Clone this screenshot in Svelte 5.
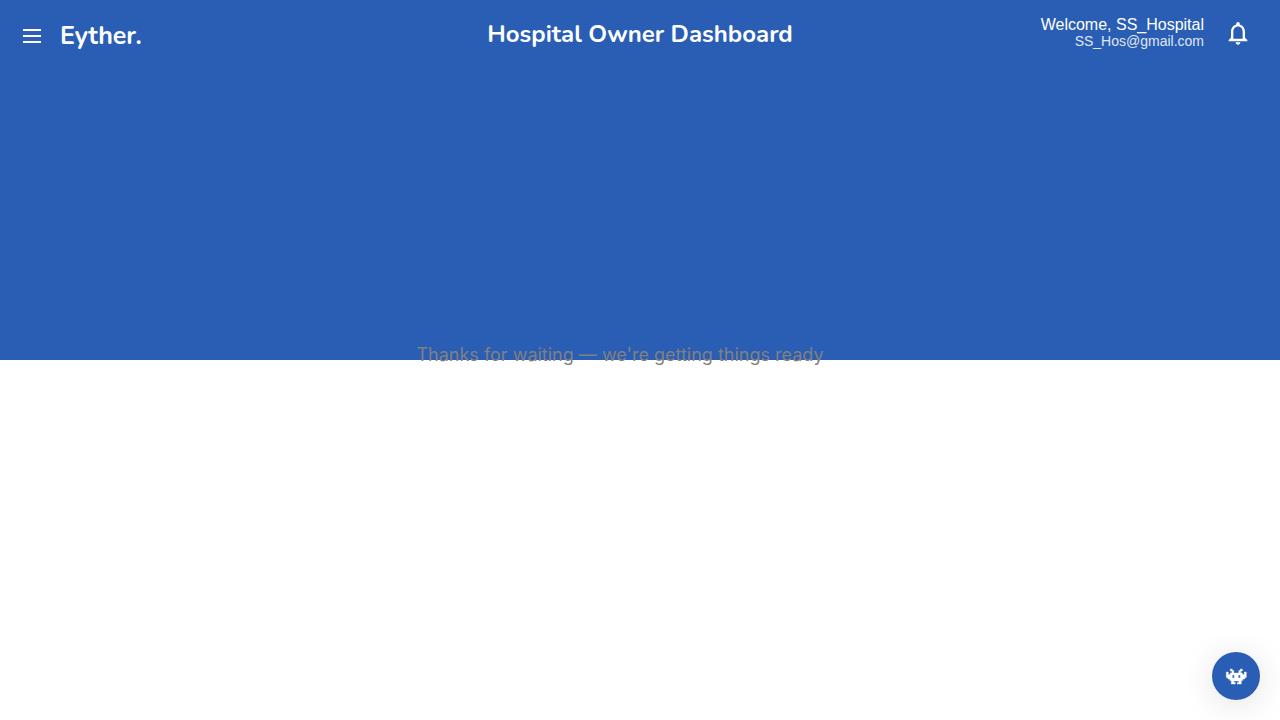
<script>
  const user = { name: 'SS_Hospital', email: 'SS_Hos@gmail.com' };
</script>

<svelte:head><title>Hospital Owner Dashboard</title></svelte:head>

<div class="page">
  <div class="hero">
    <header>
      <div class="brand">
        <button class="icon" aria-label="Open menu">
          <svg width="24" height="24" viewBox="0 0 24 24" fill="currentColor" aria-hidden="true">
            <path d="M3 5h18v2H3zM3 11h18v2H3zM3 17h18v2H3z" />
          </svg>
        </button>
        <span class="logo">Eyther.</span>
      </div>
      <h1>Hospital Owner Dashboard</h1>
      <div class="account">
        <div class="user">
          <span>Welcome, {user.name}</span>
          <span class="email">{user.email}</span>
        </div>
        <button class="icon" aria-label="Notifications">
          <svg width="28" height="28" viewBox="0 0 24 24" fill="currentColor" aria-hidden="true">
            <path d="M12 22c1.1 0 2-.9 2-2h-4c0 1.1.9 2 2 2m6-6v-5c0-3.07-1.63-5.64-4.5-6.32V4c0-.83-.67-1.5-1.5-1.5s-1.5.67-1.5 1.5v.68C7.64 5.36 6 7.92 6 11v5l-2 2v1h16v-1zm-2 1H8v-6c0-2.48 1.51-4.5 4-4.5s4 2.02 4 4.5z" />
          </svg>
        </button>
      </div>
    </header>
  </div>
  <p class="status" role="status">Thanks for waiting — we're getting things ready</p>
  <button class="chat" aria-label="Open assistant">
    <svg width="22" height="18" viewBox="-1.3 -1.5 22 18" fill="currentColor" stroke="currentColor" stroke-width="0.4" fill-rule="evenodd" aria-hidden="true">
      <path d="M4 .5h2V2h1.5v2.5h5V2H14V.5h2v2h-1.5v2H16V6h2V3.500h2V9h-1.500v1.500H16.500V12H15v3.500h-4V14h1.500v-1.500h-5V14H9v1.500H5V12H3.500v-1.500H1.500V9H0V3.500h2V6h2V4.500h1.500v-2H4zM6 6.500v3h2v-3zM12 6.500v3h2v-3z" />
    </svg>
  </button>
</div>

<style>
  :global(body) {
    margin: 0;
    background: #fff;
  }
  .page {
    position: relative;
    min-height: 100vh;
    font-family: "Liberation Sans", Arial, sans-serif;
  }
  .hero {
    min-height: 50vh;
    background: #295eb4;
    color: #fff;
  }
  header {
    display: grid;
    grid-template-columns: 1fr auto 1fr;
    align-items: center;
    padding: 14px 20px 0;
  }
  button {
    border: 0;
    padding: 0;
    color: #fff;
    cursor: pointer;
  }
  .icon {
    display: flex;
    background: none;
  }
  .brand {
    display: flex;
    align-items: center;
    gap: 16px;
    padding-top: 6px;
  }
  .logo,
  h1 {
    margin: 0;
    font-family: Nunito, Lato, sans-serif;
    font-size: 24px;
    font-weight: 700;
    line-height: 32px;
  }
  .logo {
    font-size: 25px;
  }
  h1 {
    padding-top: 2px;
  }
  .account {
    display: flex;
    align-items: center;
    justify-content: flex-end;
    gap: 20px;
    padding-right: 8px;
  }
  .user {
    display: flex;
    flex-direction: column;
    align-items: flex-end;
    font-size: 16px;
    line-height: 17px;
  }
  .email {
    font-size: 14px;
    opacity: 0.85;
  }
  .status {
    position: absolute;
    top: 50%;
    left: 0;
    right: 40px;
    margin: -16px 0 0;
    color: #808080;
    font-family: Inter, sans-serif;
    font-size: 18px;
    line-height: 22px;
    text-align: center;
  }
  .chat {
    position: fixed;
    right: 20px;
    bottom: 20px;
    display: grid;
    place-items: center;
    width: 48px;
    height: 48px;
    border-radius: 50%;
    background: #295eb4;
    box-shadow: 0 4px 32px rgba(0, 0, 0, 0.12);
  }
</style>
